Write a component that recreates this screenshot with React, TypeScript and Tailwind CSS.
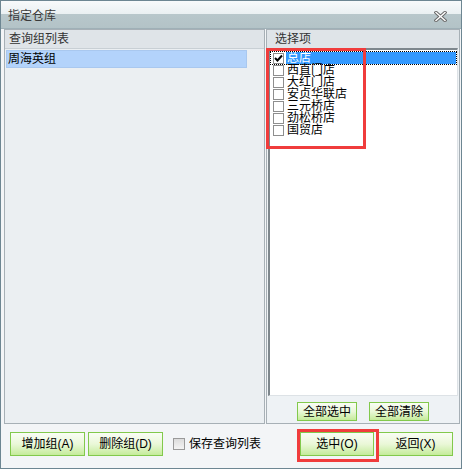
const stores = ['总店', '西直门店', '大红门店', '安贞华联店', '三元桥店', '劲松桥店', '国贸店'];

function Box({ checked = false, big = false }: { checked?: boolean; big?: boolean }) {
  return (
    <span
      className={
        big
          ? 'w-[12px] h-[12px] shrink-0 border border-[#9a9a9a] bg-linear-to-b from-[#dcdcdc] to-[#f4f4f4]'
          : 'w-[11px] h-[11px] shrink-0 border border-[#8e8e8e] bg-white flex items-center justify-center'
      }
    >
      {checked && (
        <svg width="9" height="9" viewBox="0 0 9 9">
          <path d="M1 4 L3.5 6.5 L8 1.5" fill="none" stroke="#000" strokeWidth="2" />
        </svg>
      )}
    </span>
  );
}

function Btn({ label, w, h }: { label: string; w: string; h: string }) {
  return (
    <button
      className={`${w} ${h} border border-[#82c94c] bg-linear-to-b from-[#fafdf5] via-[#eaf8d8] to-[#c5eb9a] text-[12px] leading-none text-black flex items-center justify-center`}
    >
      {label}
    </button>
  );
}

export default function App() {
  return (
    <div className="relative w-[462px] h-[469px] border border-[#6d8692] bg-[#f3f5f7] flex flex-col font-['Liberation_Sans','Noto_Sans_CJK_SC',sans-serif] text-[12px] text-[#222]">
      {/* title bar */}
      <div className="h-[28px] shrink-0 flex items-center justify-between pl-[7px] pr-[14px] bg-[linear-gradient(to_bottom,#f8fafb_0%,#eaf0f2_48%,#b8c7cb_50%,#b3c3c7_100%)] border-b border-[#9fb0b7]">
        <span className="text-[12px] leading-none text-[#3a3a3a] pt-[2px]">指定仓库</span>
        <svg width="13" height="11" viewBox="0 0 13 11" className="mt-[3px]">
          <path d="M2 1.5 L11 9.5 M11 1.5 L2 9.5" stroke="#6a6a6a" strokeWidth="3.4" strokeLinecap="square" />
          <path d="M2 1.5 L11 9.5 M11 1.5 L2 9.5" stroke="#ffffff" strokeWidth="1.4" strokeLinecap="square" />
        </svg>
      </div>

      {/* panels */}
      <div className="h-[395px] flex gap-[1px] pl-[3px] pr-[1px]">
        <div className="w-[261px] flex flex-col border border-[#a7b0b6]">
          <div className="h-[18px] shrink-0 bg-[#dfe4e8] pl-[4px] flex items-center leading-none text-[#333]">查询组列表</div>
          <div className="flex-1 bg-[#ebeff2] border-t border-[#c8cfd4] p-[1px]">
            <div className="w-[241px] h-[18px] bg-[#b3d3fb] border border-[#a9c8ef] pl-[1px] flex items-center leading-none text-black">
              周海英组
            </div>
          </div>
        </div>

        <div className="w-[194px] flex flex-col border border-[#a7b0b6] bg-[#eef2f5]">
          <div className="h-[18px] shrink-0 bg-[#dfe4e8] pl-[8px] flex items-center leading-none text-[#333]">选择项</div>
          <div className="mx-[1px] h-[348px] bg-white border-t-2 border-l-2 border-[#7e878d] border-r border-b border-r-[#dde2e6] border-b-[#dde2e6] pt-[2px]">
            {stores.map((s, i) => (
              <div
                key={s}
                className={`ml-[1px] w-[185px] h-[12px] flex items-center ${i === 0 ? 'outline-1 outline-dotted outline-black' : ''}`}
              >
                <span className="ml-[2px]">
                  <Box checked={i === 0} />
                </span>
                <span
                  className={`ml-[2px] h-[12px] flex items-center pl-[1px] leading-none ${i === 0 ? 'flex-1 bg-[#3399ff] text-white' : 'text-black'}`}
                >
                  {s}
                </span>
              </div>
            ))}
          </div>
          <div className="flex-1 flex items-start justify-center gap-[12px] pt-[6px]">
            <Btn label="全部选中" w="w-[60px]" h="h-[19px]" />
            <Btn label="全部清除" w="w-[60px]" h="h-[19px]" />
          </div>
        </div>
      </div>

      {/* bottom bar */}
      <div className="flex-1 flex items-start pt-[8px] pl-[9px] pr-[8px]">
        <div className="flex gap-[3px]">
          <Btn label="增加组(A)" w="w-[75px]" h="h-[24px]" />
          <Btn label="删除组(D)" w="w-[75px]" h="h-[24px]" />
        </div>
        <div className="ml-[10px] h-[24px] flex items-center gap-[4px]">
          <Box big />
          <span className="leading-none text-black">保存查询列表</span>
        </div>
        <div className="ml-auto flex gap-[4px]">
          <Btn label="选中(O)" w="w-[74px]" h="h-[24px]" />
          <Btn label="返回(X)" w="w-[75px]" h="h-[24px]" />
        </div>
      </div>

      {/* red annotation boxes */}
      <div className="absolute left-[265px] top-[47px] w-[100px] h-[101px] border-[3px] border-[#f03c3c] pointer-events-none" />
      <div className="absolute left-[296px] top-[428px] w-[82px] h-[33px] border-[3px] border-[#f03c3c] pointer-events-none" />
    </div>
  );
}
